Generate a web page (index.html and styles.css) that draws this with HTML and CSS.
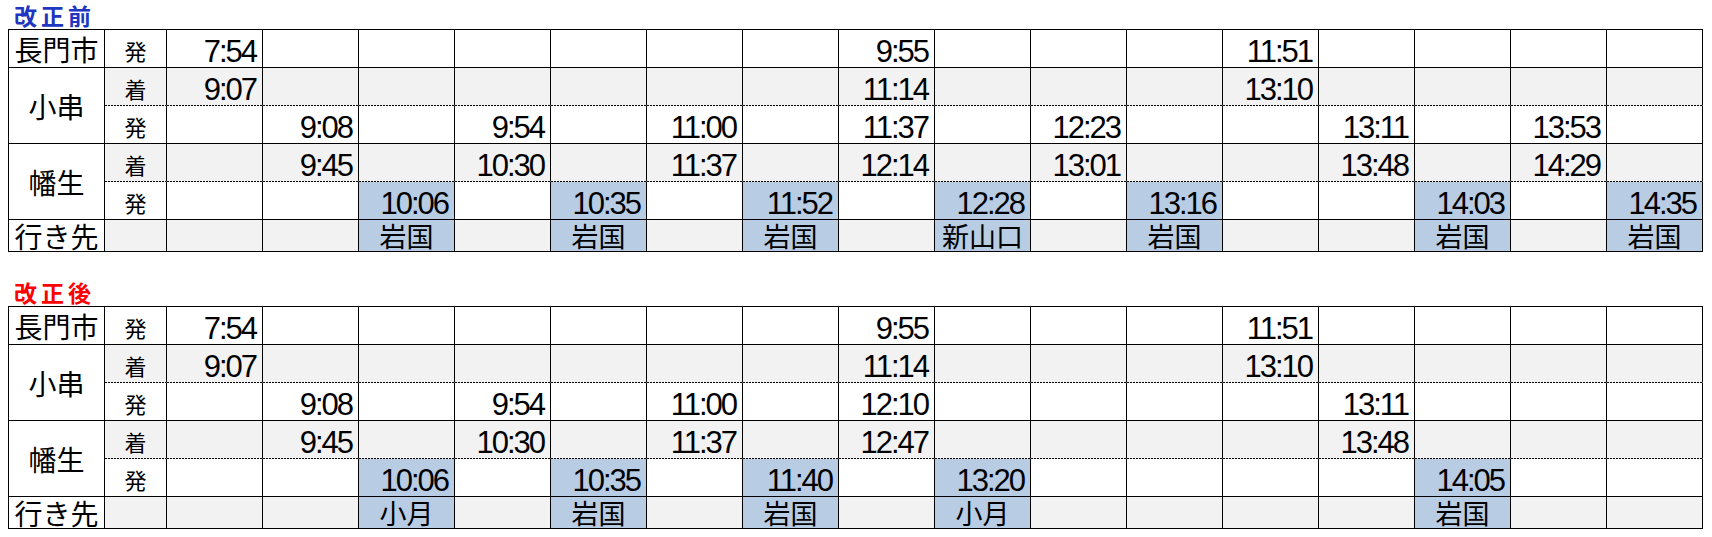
FILE: index.html
```html
<!DOCTYPE html>
<html lang="ja">
<head>
<meta charset="utf-8">
<title>ダイヤ改正</title>
<link rel="stylesheet" href="styles.css">
</head>
<body>
<div class="title before">改正前</div>
<div class="tt" role="table">
  <div class="row solo" role="row">
    <div class="c st">長門市</div><div class="c lb">発</div>
    <div class="c t">7:54</div><div class="c"></div><div class="c"></div><div class="c"></div><div class="c"></div><div class="c"></div><div class="c"></div>
    <div class="c t">9:55</div><div class="c"></div><div class="c"></div><div class="c"></div>
    <div class="c t">11:51</div><div class="c"></div><div class="c"></div><div class="c"></div><div class="c"></div>
  </div>
  <div class="row arr" role="row">
    <div class="c st span2">小串</div><div class="c lb">着</div>
    <div class="c t">9:07</div><div class="c"></div><div class="c"></div><div class="c"></div><div class="c"></div><div class="c"></div><div class="c"></div>
    <div class="c t">11:14</div><div class="c"></div><div class="c"></div><div class="c"></div>
    <div class="c t">13:10</div><div class="c"></div><div class="c"></div><div class="c"></div><div class="c"></div>
  </div>
  <div class="row dep" role="row">
    <div class="c lb">発</div>
    <div class="c"></div><div class="c t">9:08</div><div class="c"></div><div class="c t">9:54</div><div class="c"></div><div class="c t">11:00</div><div class="c"></div><div class="c t">11:37</div>
    <div class="c"></div><div class="c t">12:23</div><div class="c"></div><div class="c"></div><div class="c t">13:11</div><div class="c"></div><div class="c t">13:53</div><div class="c"></div>
  </div>
  <div class="row arr" role="row">
    <div class="c st span2">幡生</div><div class="c lb">着</div>
    <div class="c"></div><div class="c t">9:45</div><div class="c"></div><div class="c t">10:30</div><div class="c"></div><div class="c t">11:37</div><div class="c"></div><div class="c t">12:14</div>
    <div class="c"></div><div class="c t">13:01</div><div class="c"></div><div class="c"></div><div class="c t">13:48</div><div class="c"></div><div class="c t">14:29</div><div class="c"></div>
  </div>
  <div class="row dep" role="row">
    <div class="c lb">発</div>
    <div class="c"></div><div class="c"></div><div class="c t hl">10:06</div><div class="c"></div><div class="c t hl">10:35</div><div class="c"></div><div class="c t hl">11:52</div><div class="c"></div>
    <div class="c t hl">12:28</div><div class="c"></div><div class="c t hl">13:16</div><div class="c"></div><div class="c"></div><div class="c t hl">14:03</div><div class="c"></div><div class="c t hl">14:35</div>
  </div>
  <div class="row dest" role="row">
    <div class="c st">行き先</div><div class="c"></div>
    <div class="c"></div><div class="c"></div><div class="c d hl">岩国</div><div class="c"></div><div class="c d hl">岩国</div><div class="c"></div><div class="c d hl">岩国</div><div class="c"></div>
    <div class="c d hl">新山口</div><div class="c"></div><div class="c d hl">岩国</div><div class="c"></div><div class="c"></div><div class="c d hl">岩国</div><div class="c"></div><div class="c d hl">岩国</div>
  </div>
</div>

<div class="title after">改正後</div>
<div class="tt" role="table">
  <div class="row solo" role="row">
    <div class="c st">長門市</div><div class="c lb">発</div>
    <div class="c t">7:54</div><div class="c"></div><div class="c"></div><div class="c"></div><div class="c"></div><div class="c"></div><div class="c"></div>
    <div class="c t">9:55</div><div class="c"></div><div class="c"></div><div class="c"></div>
    <div class="c t">11:51</div><div class="c"></div><div class="c"></div><div class="c"></div><div class="c"></div>
  </div>
  <div class="row arr" role="row">
    <div class="c st span2">小串</div><div class="c lb">着</div>
    <div class="c t">9:07</div><div class="c"></div><div class="c"></div><div class="c"></div><div class="c"></div><div class="c"></div><div class="c"></div>
    <div class="c t">11:14</div><div class="c"></div><div class="c"></div><div class="c"></div>
    <div class="c t">13:10</div><div class="c"></div><div class="c"></div><div class="c"></div><div class="c"></div>
  </div>
  <div class="row dep" role="row">
    <div class="c lb">発</div>
    <div class="c"></div><div class="c t">9:08</div><div class="c"></div><div class="c t">9:54</div><div class="c"></div><div class="c t">11:00</div><div class="c"></div><div class="c t">12:10</div>
    <div class="c"></div><div class="c"></div><div class="c"></div><div class="c"></div><div class="c t">13:11</div><div class="c"></div><div class="c"></div><div class="c"></div>
  </div>
  <div class="row arr" role="row">
    <div class="c st span2">幡生</div><div class="c lb">着</div>
    <div class="c"></div><div class="c t">9:45</div><div class="c"></div><div class="c t">10:30</div><div class="c"></div><div class="c t">11:37</div><div class="c"></div><div class="c t">12:47</div>
    <div class="c"></div><div class="c"></div><div class="c"></div><div class="c"></div><div class="c t">13:48</div><div class="c"></div><div class="c"></div><div class="c"></div>
  </div>
  <div class="row dep" role="row">
    <div class="c lb">発</div>
    <div class="c"></div><div class="c"></div><div class="c t hl">10:06</div><div class="c"></div><div class="c t hl">10:35</div><div class="c"></div><div class="c t hl">11:40</div><div class="c"></div>
    <div class="c t hl">13:20</div><div class="c"></div><div class="c"></div><div class="c"></div><div class="c"></div><div class="c t hl">14:05</div><div class="c"></div><div class="c"></div>
  </div>
  <div class="row dest" role="row">
    <div class="c st">行き先</div><div class="c"></div>
    <div class="c"></div><div class="c"></div><div class="c d hl">小月</div><div class="c"></div><div class="c d hl">岩国</div><div class="c"></div><div class="c d hl">岩国</div><div class="c"></div>
    <div class="c d hl">小月</div><div class="c"></div><div class="c"></div><div class="c"></div><div class="c"></div><div class="c d hl">岩国</div><div class="c"></div><div class="c"></div>
  </div>
</div>
</body>
</html>
```
FILE: styles.css
```css
body {
  margin: 0;
  background: #fff;
  color: #000;
  font-family: "Noto Sans CJK JP", sans-serif;
}

.title {
  height: 29px;
  padding-left: 14px;
  font-size: 23px;
  font-weight: bold;
  letter-spacing: 4px;
  line-height: 31px;
}
.title.before { color: #2036c0; }
.title.after { color: #ff0000; margin-top: 25px; }

.tt {
  display: grid;
  grid-template-columns: 96px 62px repeat(16, 96px);
  grid-template-rows: repeat(5, 38px) 32px;
  width: max-content;
  margin-left: 8px;
  border-top: 1px solid #000;
  border-left: 1px solid #000;
}

.row { display: contents; }

.c {
  box-sizing: border-box;
  border-right: 1px solid #000;
  border-bottom: 1px solid #000;
  background-color: #fff;
  display: flex;
  align-items: center;
  justify-content: center;
  white-space: nowrap;
}

.span2 { grid-row: span 2; }

.arr > .c:not(.st) {
  background-color: #f2f2f2;
  border-bottom-color: transparent;
  background-image: linear-gradient(to right, #000 2px, transparent 2px);
  background-size: 3px 1px;
  background-repeat: repeat-x;
  background-origin: border-box;
  background-position: 0 100%;
}
.dest > .c:not(.st) { background-color: #f2f2f2; }
.row > .c.hl { background-color: #b8cce4; }

.st {
  font-size: 28px;
  line-height: 28px;
}
.lb {
  font-size: 22px;
  line-height: 22px;
  padding-top: 2px;
}
.t {
  justify-content: flex-end;
  align-items: flex-end;
  padding-right: 6px;
  font-family: "Liberation Sans", Arial, sans-serif;
  font-size: 31px;
  line-height: 31px;
  letter-spacing: -2px;
}
.d {
  font-size: 27px;
  line-height: 27px;
}
```
